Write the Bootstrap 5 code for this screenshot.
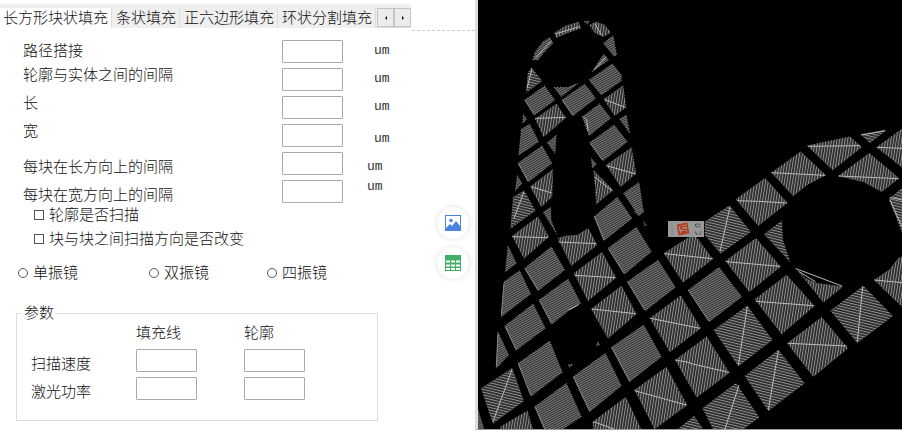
<!DOCTYPE html>
<html lang="zh-CN">
<head>
<meta charset="utf-8">
<meta name="viewport" content="width=device-width, initial-scale=1">
<title>填充参数</title>
<link href="https://cdn.jsdelivr.net/npm/bootstrap@5.3.0/dist/css/bootstrap.min.css" rel="stylesheet">
<style>
body{font:300 15px/20px "Liberation Sans","Noto Sans CJK SC",sans-serif;color:#111;background:#fff}
.side-panel{flex:0 0 411px;min-width:0}
.tab-strip{background:#f0f0f0;height:24px;margin-top:4px;border-bottom:1px solid #dcdcdc;flex-wrap:nowrap}
.tab-strip .nav-link{color:#111;padding:0 3px 0 4px;height:20px;line-height:20px;white-space:nowrap;border:0;border-right:1px solid #dcdcdc;border-radius:0;margin-top:4px}
.tab-strip .nav-link.active{color:#111;background:#fff;padding-left:3px;line-height:18px}
.step-btn{width:17px;height:19px;background:#ececec;border:1px solid #c4c4c4;padding:0;display:flex;align-items:center;justify-content:center}
.param-form{padding:9px 0 0 23px}
.line-row{height:28px}
.line-row label{width:259px}
.num-box{width:61px;height:23px;border:1px solid #aaa;border-radius:1px;padding:0 3px;background:#fff}
.unit{font:400 13px/20px "Liberation Mono",monospace;color:#333;margin-left:31px}
.unit-near{margin-left:24px}
.check-list{padding:0 0 0 11px;gap:4px}
.tick{width:10px;height:10px;border:1px solid #555;margin:0 5px 0 0;background:#fff;appearance:none;flex:none}
.tick:checked{background:#555}
.tick[type=radio]{border-radius:50%}
.mirror-row{padding:14px 0 0 18px;display:grid;grid-template-columns:131px 118px 1fr}
.group-box{border:1px solid #ddd;margin:20px 33px 0 16px;padding:0 0 18px 14px}
.group-box legend{float:none;width:auto;font-size:15px;line-height:20px;margin:-11px 0 0 -10px;padding:0 3px;background:#fff}
.speed-grid{display:grid;grid-template-columns:105px 108px 61px;grid-template-rows:23px 28px 28px}
.tool-rail{flex:0 0 64px;padding:30px 0 0 1px}
.rail-rule{border-top:1px dashed #ccc}
.rail-btn{width:32px;height:32px;background:#fff;box-shadow:0 0 5px #ddd;border:0;margin-left:25px;padding:0;display:flex;align-items:center;justify-content:center}
.rail-tools{padding-top:176px;gap:8px}
.view-area{border-left:3px solid #ddd;border-bottom:1px solid #999;background:#000;min-width:0;align-self:flex-start}
.view-area svg{display:block;width:100%}
</style>
<script src="https://cdn.jsdelivr.net/npm/bootstrap@5.3.0/dist/js/bootstrap.bundle.min.js"></script>
</head>
<body>
<main class="d-flex">
<section class="side-panel">
  <div class="nav tab-strip" role="tablist">
    <button class="nav-link active" role="tab" aria-selected="true">长方形块状填充</button>
    <button class="nav-link" role="tab">条状填充</button>
    <button class="nav-link" role="tab">正六边形填充</button>
    <button class="nav-link" role="tab">环状分割填充</button>
    <div class="d-flex ms-auto mt-1">
      <button class="step-btn" aria-label="向左"><svg width="4" height="6"><path d="M3 1v4L1 3z" fill="#111"/></svg></button>
      <button class="step-btn" aria-label="向右"><svg width="4" height="6"><path d="M1 1v4L3 3z" fill="#111"/></svg></button>
    </div>
  </div>
  <form>
    <div class="param-form">
      <div class="line-row d-flex align-items-center"><label for="a1">路径搭接</label><input class="num-box" id="a1"><span class="unit">um</span></div>
      <div class="line-row d-flex align-items-center"><label class="align-self-start" for="a2">轮廓与实体之间的间隔</label><input class="num-box" id="a2"><span class="unit">um</span></div>
      <div class="line-row d-flex align-items-center"><label class="align-self-start" for="a3">长</label><input class="num-box" id="a3"><span class="unit">um</span></div>
      <div class="line-row d-flex align-items-center"><label class="align-self-start" for="a4">宽</label><input class="num-box" id="a4"><span class="unit align-self-end">um</span></div>
      <div class="line-row d-flex align-items-center"><label class="align-self-end" for="a5">每块在长方向上的间隔</label><input class="num-box" id="a5"><span class="unit unit-near align-self-end">um</span></div>
      <div class="line-row d-flex align-items-center"><label class="align-self-end" for="a6">每块在宽方向上的间隔</label><input class="num-box" id="a6"><span class="unit unit-near align-self-start">um</span></div>
      <div class="check-list d-flex flex-column">
        <label class="d-flex align-items-center"><input class="tick" type="checkbox">轮廓是否扫描</label>
        <label class="d-flex align-items-center"><input class="tick" type="checkbox">块与块之间扫描方向是否改变</label>
      </div>
    </div>
    <div class="mirror-row">
      <label class="d-flex align-items-center"><input class="tick" type="radio" name="mirror">单振镜</label>
      <label class="d-flex align-items-center"><input class="tick" type="radio" name="mirror">双振镜</label>
      <label class="d-flex align-items-center"><input class="tick" type="radio" name="mirror">四振镜</label>
    </div>
    <fieldset class="group-box">
      <legend>参数</legend>
      <div class="speed-grid align-items-center">
        <span></span><span id="c1" class="align-self-start">填充线</span><span id="c2" class="align-self-start">轮廓</span>
        <span id="r1" class="align-self-end">扫描速度</span><input class="num-box" aria-labelledby="r1 c1"><input class="num-box" aria-labelledby="r1 c2">
        <span id="r2" class="align-self-end">激光功率</span><input class="num-box" aria-labelledby="r2 c1"><input class="num-box" aria-labelledby="r2 c2">
      </div>
    </fieldset>
  </form>
</section>
<aside class="tool-rail">
  <div class="rail-rule"></div>
  <div class="rail-tools d-flex flex-column">
    <button class="rail-btn rounded-circle" aria-label="图片"><svg width="16" height="16" viewBox="0 0 16 16"><path fill="#4785df" fill-rule="evenodd" d="M0 0h16v16H0zM1 1v12l4-4 2 2 4-5 4 5V1z"/><circle cx="6" cy="5.500" r="1.700" fill="#4785df"/></svg></button>
    <button class="rail-btn rounded-circle" aria-label="表格"><svg width="16" height="16" viewBox="0 0 16 16"><path fill="#40ae67" d="M0 0h16v16H0z"/><path stroke="#fff" stroke-width="2" stroke-dasharray="4 1" d="M1 6.500h14M1 10.500h14M1 14h14"/></svg></button>
  </div>
</aside>
<section class="view-area flex-grow-1">
<svg viewBox="0 0 1272 1287" role="img" aria-label="分块填充预览">
<defs>
<pattern id="pd" width="6" height="6" patternUnits="userSpaceOnUse" patternTransform="rotate(-28)"><path fill="#2c2c2c" d="M0 0h6v6H0z"/><path fill="#7c7c7c" d="M0 0h6v3H0z"/></pattern>
<pattern id="pv" width="8" height="8" patternUnits="userSpaceOnUse" patternTransform="rotate(9)"><path fill="#282828" d="M0 0h8v8H0z"/><path fill="#929292" d="M0 0h3v8H0z"/></pattern>
<pattern id="ph" width="8" height="8" patternUnits="userSpaceOnUse" patternTransform="rotate(14)"><path fill="#282828" d="M0 0h8v8H0z"/><path fill="#929292" d="M0 0h8v3H0z"/></pattern>
</defs>
<g stroke="#999" stroke-width="2" stroke-dasharray="3 6">
<g fill="url(#pd)">
<path d="M165 180L170 158 195 125 215 112 225 130 200 155 180 180zM318 64H335L328 72zM376 130L405 107 416 165 408 168zM342 215L377 163 392 180zM140 300L200 257 230 300 170 345zM228 262H270L300 250 250 290zM252 300L320 252 353 295 285 347zM333 240L403 192 430 225V242L370 285zM313 350L365 311 398 355 333 407zM425 357L445 345 455 400zM136 343L146 358 134 370zM130 388L155 373 182 425 122 466zM208 428L235 405 231 460zM335 428L408 375 448 425 375 482zM120 490L192 437 222 490 152 545zM340 475L355 492 343 505zM118 527L132 550 112 572zM437 580L483 547 496 635 482 648zM196 637L218 622 219 660 236 702zM348 650L418 592 462 655 378 722zM470 636L478 630 498 632 485 645z"/>
<path transform="translate(0 630)" d="M90 108L115 160 82 185zM78 215L125 182 158 252 70 320zM140 175L220 110 260 180 180 242zM390 115L475 52 520 125 440 192zM183 270L270 207 308 280 275 300 222 342zM80 348L165 282 202 355 115 420zM60 367L92 435 55 475zM448 215L540 150 592 232 502 302zM631 240L723 172 791 260 694 335zM120 460L215 393 253 487 160 558zM285 500L382 430 430 527 335 605zM400 412L497 345 550 440 455 515zM170 590L265 520 310 620 250 660H200zM0 600L18 656H0zM270 465L285 463 275 472zM360 395L365 405 355 408zM497 35L505 45 501 48z"/>
</g>
<g fill="url(#pv)">
<path d="M230 98L262 78 302 66 308 85 270 98 235 113zM335 75L355 66 380 75 398 98 375 110 350 98zM378 298L435 257 444 322 410 347zM172 357L235 312 263 353 197 410zM385 495L460 443 474 520 428 560zM157 560L225 508 222 590 190 620zM348 512L405 570 355 612z"/>
<path transform="translate(0 630)" d="M103 78L180 20 212 80 138 145zM240 85L262 78 300 75 330 55 357 105 280 167zM288 190L372 127 414 203 330 272zM340 297L430 228 475 312 390 385zM558 130L648 72 704 147 615 217zM516 325L608 257 668 355 576 425zM592 450L686 380 754 488 656 562zM68 650L148 603 165 660H68zM345 635L443 562 490 660H345zM470 540L565 472 627 585 530 657z"/>
<path transform="translate(636 330)" d="M138 268L225 205 292 278 205 347zM245 188L332 125 407 195 350 225 310 258zM352 107L480 80 515 112 428 180zM560 112L636 57V172zM445 198L538 130 627 205 575 245 520 215zM107 453L198 385 272 470 178 545zM553 510L600 478 625 445 636 440V590z"/>
<path transform="translate(636 780)" d="M195 118L290 45 373 138 275 222zM318 25L345 54 380 70 458 80 400 127zM292 250L395 172 473 265 370 350z"/>
</g>
<g fill="url(#ph)">
<path d="M160 203L192 243 145 277 150 220zM106 592L138 572 172 632 98 685zM10 1165L102 1105 137 1203 45 1270zM600 1288L648 1248 675 1288z"/>
<path transform="translate(636 330)" d="M45 335L118 287 182 365 92 430 45 375zM512 73L588 60 540 98zM597 268L636 235V365zM223 373L275 333 278 390 300 455z"/>
<path transform="translate(636 780)" d="M422 152L520 78 608 168 502 248zM72 210L172 138 247 240 145 318zM165 348L265 270 343 370 235 452zM38 445L138 370 207 472 160 507H70z"/>
</g>
</g>
<g fill="none" stroke="#b8b8b8" stroke-width="3">
<path d="M172 175L220 122M232 102L304 80M350 70L370 105M348 210L385 170M162 207L147 265M172 355L262 352M380 299L442 322M386 497L473 522M160 560L221 579M349 530L403 573M138 575L108 655M102 1108L45 1265M318 352L326 360 330 392"/>
<path transform="translate(0 630)" d="M103 80L210 83M242 96L355 101M290 196L412 203M342 297L473 311M560 131L704 146M518 325L666 355M592 450L636 458M636 460L752 487M470 542L625 585M347 635L410 658M272 300L302 284"/>
<path stroke="#858585" d="M142 302L168 344M254 302L284 346M122 492L150 544M337 430L373 480M350 650L378 720M142 807L180 870M392 747L438 820M82 980L115 1050M122 1092L158 1186M172 1222L200 1286M287 1132L335 1233M402 1044L455 1144M450 847L500 930M632 872L692 963M185 902L220 970M78 850L70 945M60 1000L55 1100"/>
<path transform="translate(636 330)" d="M120 290L90 425M142 272L205 274 290 279M245 188L405 196M355 109L510 107M515 75L585 62M562 112L636 115M447 198L625 206M600 262L636 270M600 270L636 350M108 455L270 469"/>
<path transform="translate(636 780)" d="M197 124L371 137M318 26L456 78M326 34L376 65M518 80L502 245M172 140L145 315M265 272L235 450M295 250L470 258M147 375L105 507M553 60L636 68"/>
</g>
<g transform="translate(570 663)">
<path fill="#999" d="M0 0h108v48H0z"/><path stroke="#666" stroke-width="3" stroke-dasharray="3 5" d="M12 5v40"/>
<path fill="none" stroke="#b83a1d" stroke-width="5" stroke-linejoin="round" d="M29 13L56 7 61 35 34 41zM53 15L38 18 39 24 52 25 53 31 38 34"/>
<path fill="none" stroke="#444" stroke-width="3" stroke-dasharray="6 3" d="M83 9h12v9H83zM83 31v8h15v-8"/>
</g>
</svg>
</section>
</main>
</body>
</html>
